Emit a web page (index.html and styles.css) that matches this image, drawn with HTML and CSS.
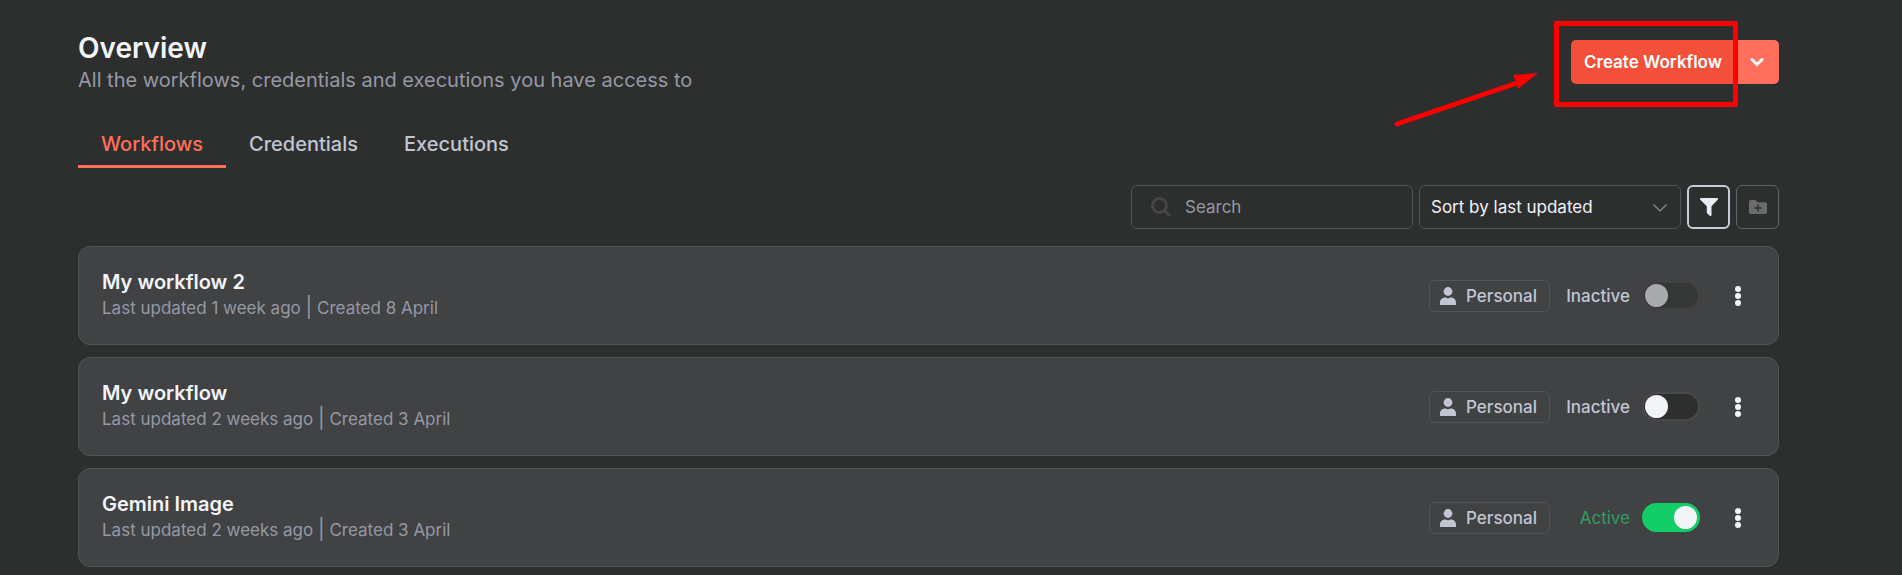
FILE: index.html
```html
<!DOCTYPE html>
<html lang="en">
<head>
    <meta charset="UTF-8">
    <meta name="viewport" content="width=device-width, initial-scale=1.0">
    <title>Overview</title>
    <link rel="stylesheet" href="styles.css">
</head>
<body>
    <!-- shared icons -->
    <svg class="sprite" aria-hidden="true">
        <symbol id="icon-user" viewBox="0 0 16 18">
            <circle cx="8" cy="4.5" r="4.4"/>
            <path d="M0 17.5v-1.8C0 12.8 2.2 10.600 5 10.600h.6a5.800 5.800 0 0 0 4.800 0h.6c2.800 0 5 2.200 5 5.100v1.800a.5.5 0 0 1-.5.500H.5a.5.5 0 0 1-.5-.5z"/>
        </symbol>
        <symbol id="icon-dots" viewBox="0 0 6 20">
            <circle cx="3" cy="3" r="3"/>
            <circle cx="3" cy="10" r="3"/>
            <circle cx="3" cy="17" r="3"/>
        </symbol>
    </svg>

    <div class="container">
        <header class="header">
            <div>
                <h1>Overview</h1>
                <p class="subtitle">All the workflows, credentials and executions you have access to</p>
            </div>
            <div class="create">
                <button type="button" class="btn-create">Create Workflow</button>
                <button type="button" class="btn-more" aria-label="More create options">
                    <svg width="14" height="10" viewBox="0 0 14 10"><path d="M2 2.500l5 5 5-5"/></svg>
                </button>
                <div class="highlight"></div>
                <svg class="arrow" width="146" height="56" viewBox="0 0 146 56">
                    <path class="arrow-line" d="M4 51L124 10"/>
                    <path class="arrow-head" d="M145 0L120 2l3 6 2 8z"/>
                </svg>
            </div>
        </header>

        <nav class="tabs">
            <a href="#workflows" class="tab active">Workflows</a>
            <a href="#credentials" class="tab">Credentials</a>
            <a href="#executions" class="tab">Executions</a>
        </nav>

        <div class="filters">
            <div class="search">
                <svg width="20" height="20" viewBox="0 0 20 20"><circle cx="8.500" cy="8.500" r="7"/><path d="M13.500 13.500l5.500 5.500"/></svg>
                <input type="text" placeholder="Search" aria-label="Search">
            </div>
            <div class="sort">
                <select aria-label="Sort">
                    <option>Sort by last updated</option>
                    <option>Sort by last created</option>
                    <option>Sort by name (A-Z)</option>
                    <option>Sort by name (Z-A)</option>
                </select>
                <svg width="16" height="10" viewBox="0 0 16 10"><path d="M1.500 1.500L8 8l6.500-6.500"/></svg>
            </div>
            <button type="button" class="btn-icon btn-filter" aria-label="Filter">
                <svg width="18" height="18" viewBox="0 0 18 18"><path d="M1 0h16c.9 0 1.300 1 .7 1.700L11.500 8.300V17c0 .9-1 1.300-1.600.7l-2.700-2.300a1 1 0 0 1-.4-.8V8.300L.3 1.700C-.3 1 .1 0 1 0z"/></svg>
            </button>
            <button type="button" class="btn-icon btn-folder" aria-label="Add folder" disabled>
                <svg width="18" height="14" viewBox="0 0 18 14"><path d="M1.700 0H6.500l2.200 2.200h7.600c.9 0 1.700.8 1.700 1.700v8.400c0 .9-.8 1.700-1.700 1.700H1.700C.8 14 0 13.200 0 12.300V1.700C0 .8.8 0 1.700 0z"/><path class="plus" d="M9 4.500v7M5.500 8h7"/></svg>
            </button>
        </div>

        <main class="list">
            <div class="card">
                <div class="info">
                    <h2>My workflow 2</h2>
                    <p>Last updated 1 week ago <span class="sep">|</span> Created 8 April</p>
                </div>
                <span class="badge"><svg width="16" height="18"><use href="#icon-user"/></svg>Personal</span>
                <label class="status" for="wf1">Inactive</label>
                <input type="checkbox" class="toggle" id="wf1" disabled>
                <button type="button" class="menu" aria-label="Actions"><svg width="6" height="20"><use href="#icon-dots"/></svg></button>
            </div>
            <div class="card">
                <div class="info">
                    <h2>My workflow</h2>
                    <p>Last updated 2 weeks ago <span class="sep">|</span> Created 3 April</p>
                </div>
                <span class="badge"><svg width="16" height="18"><use href="#icon-user"/></svg>Personal</span>
                <label class="status" for="wf2">Inactive</label>
                <input type="checkbox" class="toggle" id="wf2">
                <button type="button" class="menu" aria-label="Actions"><svg width="6" height="20"><use href="#icon-dots"/></svg></button>
            </div>
            <div class="card">
                <div class="info">
                    <h2>Gemini Image</h2>
                    <p>Last updated 2 weeks ago <span class="sep">|</span> Created 3 April</p>
                </div>
                <span class="badge"><svg width="16" height="18"><use href="#icon-user"/></svg>Personal</span>
                <label class="status on" for="wf3">Active</label>
                <input type="checkbox" class="toggle" id="wf3" checked>
                <button type="button" class="menu" aria-label="Actions"><svg width="6" height="20"><use href="#icon-dots"/></svg></button>
            </div>
        </main>
    </div>
</body>
</html>
```
FILE: styles.css
```css
* {
    box-sizing: border-box;
}
body {
    margin: 0;
    background: #2d2e2e;
    color: #f2f4f8;
    font-family: Inter, sans-serif;
    font-size: 17px;
}
button, input, select {
    font-family: inherit;
    font-size: 17px;
}
button {
    cursor: pointer;
}
h1, h2, p {
    margin: 0;
}
.sprite {
    display: none;
}
.container {
    padding: 30px 123px 8px 78px;
}
.header {
    display: flex;
    justify-content: space-between;
    align-items: flex-start;
}
.header h1 {
    font-size: 28px;
    line-height: 36px;
    font-weight: 600;
}
.subtitle {
    font-size: 20px;
    line-height: 28px;
    color: #9699a5;
}

/* create button */
.create {
    display: flex;
    position: relative;
    margin-top: 10px;
}
.btn-create, .btn-more {
    height: 44px;
    border: none;
    color: #fff;
}
.btn-create {
    padding: 0 13px;
    background: #f2503b;
    border-radius: 5px 0 0 5px;
    font-weight: 600;
}
.btn-more {
    display: flex;
    align-items: center;
    justify-content: center;
    width: 44px;
    padding: 0;
    background: #ff6f5c;
    border-radius: 0 5px 5px 0;
}
.btn-more svg {
    fill: none;
    stroke: #fff;
    stroke-width: 3;
    stroke-linecap: round;
}
.highlight {
    position: absolute;
    top: -19px;
    right: 41px;
    bottom: -23px;
    left: -17px;
    border: 5px solid #f00;
    border-radius: 2px;
    pointer-events: none;
}
.arrow {
    position: absolute;
    top: 33px;
    right: 240px;
}
.arrow-line {
    stroke: #f00;
    stroke-width: 5;
    stroke-linecap: round;
}
.arrow-head {
    fill: #f00;
}

/* tabs */
.tabs {
    display: flex;
    margin-top: 36px;
}
.tab {
    padding: 0 23px 7px;
    border-bottom: 3px solid transparent;
    font-size: 20px;
    line-height: 28px;
    font-weight: 500;
    color: #c0c6d2;
    text-decoration: none;
}
.tab.active {
    color: #ff6f5c;
    border-color: #ff6f5c;
}

/* search, sort and filter row */
.filters {
    display: flex;
    justify-content: flex-end;
    gap: 6px;
    margin: 17px 0;
}
.search, .sort {
    position: relative;
    height: 44px;
    border: 1px solid #525356;
    border-radius: 6px;
}
.search {
    display: flex;
    align-items: center;
    gap: 14px;
    width: 282px;
    padding: 0 19px;
}
.search svg {
    flex: none;
    fill: none;
    stroke: #454648;
    stroke-width: 3;
}
.search input {
    width: 100%;
    padding: 0;
    border: none;
    outline: none;
    background: none;
    color: #f2f4f8;
}
.search input::placeholder {
    color: #9699a5;
}
.sort {
    width: 262px;
}
.sort select {
    appearance: none;
    width: 100%;
    height: 100%;
    padding: 0 40px 0 11px;
    border: none;
    outline: none;
    background: none;
    color: #f2f4f8;
}
.sort svg {
    position: absolute;
    top: 17px;
    right: 12px;
    fill: none;
    stroke: #7e8186;
    stroke-width: 1.5;
    pointer-events: none;
}
.btn-icon {
    display: flex;
    align-items: center;
    justify-content: center;
    width: 43px;
    height: 44px;
    padding: 0;
    background: none;
    border: 1px solid #626365;
    border-radius: 6px;
}
.btn-filter {
    border: 2px solid #c9ccd8;
}
.btn-filter svg {
    fill: #e8ecf4;
}
.btn-folder svg {
    fill: #6b6c6d;
}
.btn-folder .plus {
    stroke: #3a3b3b;
    stroke-width: 2;
}

/* workflow cards */
.list {
    display: flex;
    flex-direction: column;
    gap: 12px;
}
.card {
    display: flex;
    align-items: center;
    min-height: 99px;
    padding: 0 26px 0 23px;
    background: #414244;
    border: 1px solid #525356;
    border-radius: 12px;
}
.info {
    flex: 1;
}
.info h2 {
    font-size: 20px;
    line-height: 25px;
    font-weight: 600;
}
.info p {
    line-height: 25px;
    color: #9699a5;
}
.sep {
    font-size: 20px;
}
.badge {
    display: flex;
    align-items: center;
    gap: 10px;
    height: 32px;
    padding: 0 12px 0 10px;
    border: 1px solid #525356;
    border-radius: 6px;
    color: #c0c6d2;
    font-weight: 500;
}
.badge svg {
    fill: #c0c6d2;
}
.status {
    width: 80px;
    text-align: right;
    color: #c0c6d2;
    font-weight: 500;
}
.status.on {
    color: #2f9e60;
    font-weight: 400;
}
.toggle {
    appearance: none;
    width: 58px;
    height: 29px;
    margin: 0 24px 0 12px;
    padding: 1px;
    border: 2px solid #48494b;
    border-radius: 15px;
    background: #2d2e2e;
    cursor: pointer;
}
.toggle::before {
    content: "";
    display: block;
    width: 23px;
    height: 23px;
    border-radius: 50%;
    background: #f2f4f8;
}
.toggle:checked {
    background: #13ce66;
    border-color: #13ce66;
}
.toggle:checked::before {
    margin-left: auto;
}
.toggle:disabled {
    background: #353636;
    border-color: #414244;
}
.toggle:disabled::before {
    background: #a8aaad;
}
.menu {
    display: flex;
    justify-content: center;
    width: 28px;
    padding: 0;
    border: none;
    background: none;
}
.menu svg {
    fill: #f2f4f8;
}
```
